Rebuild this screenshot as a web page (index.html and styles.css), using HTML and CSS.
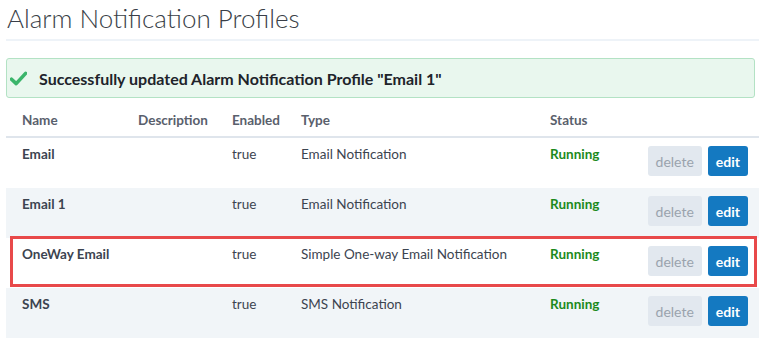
FILE: index.html
```html
<!DOCTYPE html>
<html lang="en">
<head>
    <meta charset="UTF-8">
    <meta name="viewport" content="width=device-width, initial-scale=1.0">
    <title>Alarm Notification Profiles</title>
    <link rel="stylesheet" href="styles.css">
</head>
<body>
    <div class="page">
        <h1 class="page-title">Alarm Notification Profiles</h1>

        <div class="alert-success">
            <svg class="alert-icon" width="17" height="15" viewBox="0 0 17 15">
                <path d="M1.5 8.2 L6.2 12.6 L15.6 2.4" fill="none" stroke="#3bb56b" stroke-width="3.6" stroke-linecap="round" stroke-linejoin="round"/>
            </svg>
            <span>Successfully updated Alarm Notification Profile "Email 1"</span>
        </div>

        <table class="profiles">
            <colgroup>
                <col class="col-name">
                <col class="col-desc">
                <col class="col-enabled">
                <col class="col-type">
                <col class="col-status">
                <col class="col-actions">
            </colgroup>
            <thead>
                <tr>
                    <th>Name</th>
                    <th>Description</th>
                    <th>Enabled</th>
                    <th>Type</th>
                    <th>Status</th>
                    <th></th>
                </tr>
            </thead>
            <tbody>
                <tr>
                    <td class="name">Email</td>
                    <td></td>
                    <td>true</td>
                    <td>Email Notification</td>
                    <td class="status">Running</td>
                    <td class="actions"><button class="btn btn-delete" disabled>delete</button><button class="btn btn-edit">edit</button></td>
                </tr>
                <tr>
                    <td class="name">Email 1</td>
                    <td></td>
                    <td>true</td>
                    <td>Email Notification</td>
                    <td class="status">Running</td>
                    <td class="actions"><button class="btn btn-delete" disabled>delete</button><button class="btn btn-edit">edit</button></td>
                </tr>
                <tr class="highlight">
                    <td class="name">OneWay Email</td>
                    <td></td>
                    <td>true</td>
                    <td>Simple One-way Email Notification</td>
                    <td class="status">Running</td>
                    <td class="actions"><button class="btn btn-delete" disabled>delete</button><button class="btn btn-edit">edit</button></td>
                </tr>
                <tr>
                    <td class="name">SMS</td>
                    <td></td>
                    <td>true</td>
                    <td>SMS Notification</td>
                    <td class="status">Running</td>
                    <td class="actions"><button class="btn btn-delete" disabled>delete</button><button class="btn btn-edit">edit</button></td>
                </tr>
            </tbody>
        </table>
    </div>
</body>
</html>
```

FILE: styles.css
```css
body {
    margin: 0;
    font-family: Lato, "Open Sans", sans-serif;
    color: #3c4450;
    background: #fff;
}
.page {
    padding: 0 0 0 6px;
}
.page-title {
    margin: 0;
    padding: 2px 0 0 1px;
    height: 37px;
    font-size: 26px;
    line-height: 32px;
    font-weight: 300;
    color: #3a3f48;
    border-bottom: 2px solid #eef3f8;
}
.alert-success {
    display: flex;
    align-items: center;
    margin: 17px 4px 0 0;
    height: 38px;
    padding: 0 0 0 3px;
    background: #e9f7ee;
    border: 1px solid #b3e2c4;
    border-radius: 3px;
    font-size: 16px;
    font-weight: bold;
    color: #20232a;
}
.alert-icon {
    margin: 0 12px 0 0;
}
.profiles {
    width: 753px;
    margin-top: 8px;
    border-collapse: collapse;
    table-layout: fixed;
    font-size: 13.5px;
}
.col-name { width: 116px; }
.col-desc { width: 94px; }
.col-enabled { width: 69px; }
.col-type { width: 249px; }
.col-status { width: 100px; }
.col-actions { width: 125px; }
.profiles th {
    text-align: left;
    padding: 4px 0 6px 16px;
    line-height: 20px;
    font-weight: bold;
    color: #59606c;
    border-bottom: 2px solid #dfe5ec;
}
.profiles td {
    height: 50px;
    box-sizing: border-box;
    padding: 6px 0 14px 16px;
    vertical-align: top;
    line-height: 20px;
    color: #3c4450;
    white-space: nowrap;
}
.profiles tbody tr:nth-child(even) {
    background: #f1f5f8;
}
.profiles td.name {
    font-weight: bold;
}
.profiles td.status {
    font-weight: bold;
    color: #1c8a1c;
}
.profiles td.actions {
    text-align: right;
    padding: 8px 11px 12px 0;
}
.profiles tr.highlight td:first-child {
    position: relative;
}
.profiles tr.highlight td:first-child::after {
    content: "";
    position: absolute;
    left: 4px;
    top: -2px;
    width: 747px;
    height: 51px;
    box-sizing: border-box;
    border: 3px solid #e8494a;
    pointer-events: none;
}
.btn {
    height: 30px;
    border: none;
    border-radius: 3px;
    font-family: inherit;
    font-size: 14px;
    padding: 0 8px;
    vertical-align: top;
}
.btn-delete {
    background: #e2e8ef;
    color: #9aa3ad;
    margin-right: 6px;
}
.btn-edit {
    background: #1479c1;
    color: #fff;
    font-weight: bold;
}
```
